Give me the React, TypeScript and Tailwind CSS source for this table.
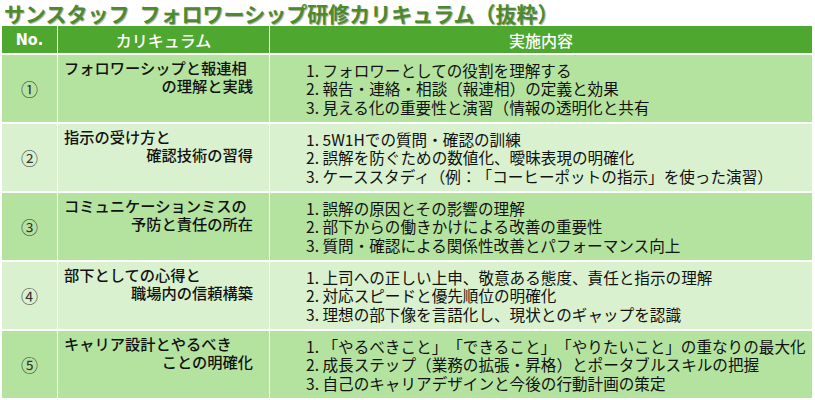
const rows = [
  {
    no: "①",
    title: ["フォロワーシップと報連相", "の理解と実践"],
    items: [
      "フォロワーとしての役割を理解する",
      "報告・連絡・相談（報連相）の定義と効果",
      "見える化の重要性と演習（情報の透明化と共有",
    ],
  },
  {
    no: "②",
    title: ["指示の受け方と", "確認技術の習得"],
    items: [
      "5W1Hでの質問・確認の訓練",
      "誤解を防ぐための数値化、曖昧表現の明確化",
      "ケーススタディ（例：「コーヒーポットの指示」を使った演習）",
    ],
  },
  {
    no: "③",
    title: ["コミュニケーションミスの", "予防と責任の所在"],
    items: [
      "誤解の原因とその影響の理解",
      "部下からの働きかけによる改善の重要性",
      "質問・確認による関係性改善とパフォーマンス向上",
    ],
  },
  {
    no: "④",
    title: ["部下としての心得と", "職場内の信頼構築"],
    items: [
      "上司への正しい上申、敬意ある態度、責任と指示の理解",
      "対応スピードと優先順位の明確化",
      "理想の部下像を言語化し、現状とのギャップを認識",
    ],
  },
  {
    no: "⑤",
    title: ["キャリア設計とやるべき", "ことの明確化"],
    items: [
      "「やるべきこと」「できること」「やりたいこと」の重なりの最大化",
      "成長ステップ（業務の拡張・昇格）とポータブルスキルの把握",
      "自己のキャリアデザインと今後の行動計画の策定",
    ],
  },
];

export default function App() {
  return (
    <div className="w-[815px] h-[400px] bg-white overflow-hidden font-['Noto_Sans_CJK_JP','Noto_Sans',sans-serif] text-[#111] [text-spacing-trim:space-all]">
      <h1 className="flex gap-[10px] pl-[4px] h-[26px] pt-[1px] text-[21px] leading-[24px] font-bold text-[#4b8b2b] [text-shadow:1px_1px_1px_rgba(0,0,0,0.35)] whitespace-nowrap">
        <span>サンスタッフ</span>
        <span>フォロワーシップ研修カリキュラム（抜粋）</span>
      </h1>
      <div className="ml-[2px] w-[810px] grid grid-cols-[55px_211px_542px] gap-x-[1px] gap-y-[2px]">
        <div className="h-[27px] bg-[#4ea72e] text-white text-[16px] font-bold flex items-center justify-center font-['DejaVu_Sans_Condensed','Noto_Sans',sans-serif]">No.</div>
        <div className="h-[27px] bg-[#4ea72e] text-white text-[16px] font-medium flex items-center justify-center">カリキュラム</div>
        <div className="h-[27px] bg-[#4ea72e] text-white text-[16px] font-medium flex items-center justify-center">実施内容</div>
        {rows.map((r, i) => {
          const bg = i % 2 === 0 ? "bg-[#b4e3a0]" : "bg-[#d9f1cf]";
          return (
            <div key={r.no} className="contents">
              <div className={`${bg} h-[67px] flex items-center justify-center text-[17px] text-[#333]`}>{r.no}</div>
              <div className={`${bg} h-[67px] flex flex-col pl-[6px] pr-[16px] pt-[3px] text-[15.25px] leading-[18px] font-medium`}>
                <span>{r.title[0]}</span>
                <span className="self-end">{r.title[1]}</span>
              </div>
              <div className={`${bg} h-[67px] flex flex-col justify-center pl-[36px] text-[15.6px] leading-[18.5px] whitespace-nowrap`}>
                {r.items.map((t, k) => (
                  <div key={k}>
                    {k + 1}. {t}
                  </div>
                ))}
              </div>
            </div>
          );
        })}
      </div>
    </div>
  );
}
